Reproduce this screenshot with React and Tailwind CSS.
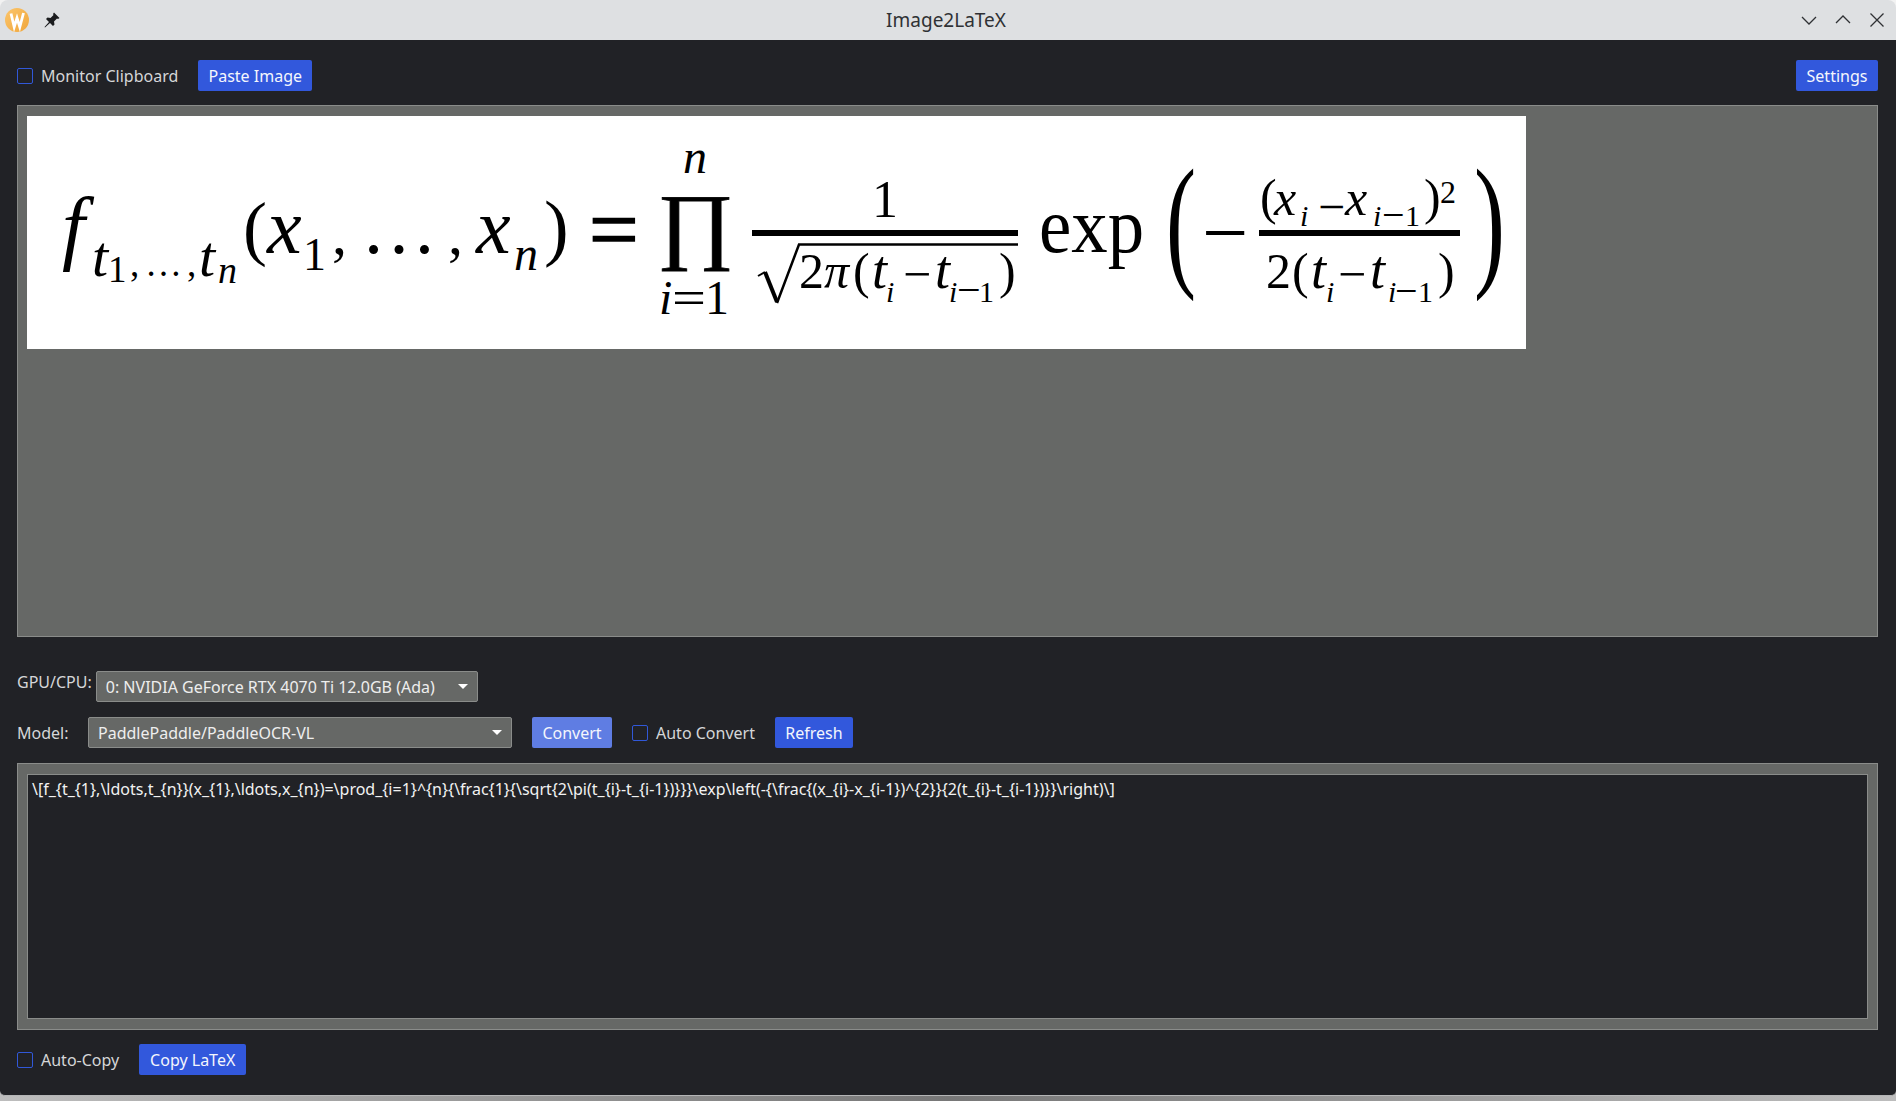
const ui = { fontFamily: '"Noto Sans", sans-serif' };

function Checkbox({ label }) {
  return (
    <label className="flex items-center gap-2 text-[16px] text-[#d5d6d8]">
      <span className="w-4 h-4 border border-[#3158d8] rounded-[2px]" />
      {label}
    </label>
  );
}

function Button({ children, light, width }) {
  return (
    <button
      className={`h-[31px] rounded-[2px] text-[16px] text-[#f4f6fc] ${width} ${light ? "bg-[#5f7de3]" : "bg-[#3258dc]"}`}
    >
      {children}
    </button>
  );
}

function Combo({ children, width }) {
  return (
    <div className={`h-[31px] flex items-center justify-between pl-[9px] pr-[9px] bg-[#666866] border border-[#8a8c8a] rounded-[2px] text-[16px] text-[#eeeeee] ${width}`}>
      <span>{children}</span>
      <span className="w-0 h-0 border-x-[5px] border-x-transparent border-t-[5px] border-t-white" />
    </div>
  );
}

// formula picture: each run sits at its own spot, like the rendered image it stands for
function Formula() {
  return (
    <svg viewBox="0 0 1499 233" className="w-[1499px] h-[233px] block" fill="#000" style={{ fontFamily: '"Liberation Serif", serif' }}>
      <g fontStyle="italic">
        <text x="35" y="138" fontSize="82">f</text>
        <text x="65" y="160" fontSize="58">t</text>
        <text x="172" y="160" fontSize="58">t</text>
        <text x="191" y="167" fontSize="38">n</text>
        <text x="240" y="137" fontSize="78">x</text>
        <text x="449" y="137" fontSize="78">x</text>
        <text x="487" y="154" fontSize="48">n</text>
        <text x="656" y="57" fontSize="48">n</text>
        <text x="632" y="198" fontSize="48">i</text>

        <text x="797" y="172" fontSize="50">π</text>
        <text x="845" y="172" fontSize="54">t</text>
        <text x="859" y="186" fontSize="30">i</text>
        <text x="908" y="172" fontSize="54">t</text>
        <text x="922" y="186" fontSize="30">i</text>

        <text x="1247" y="99" fontSize="50">x</text>
        <text x="1273" y="110" fontSize="30">i</text>
        <text x="1318" y="99" fontSize="50">x</text>
        <text x="1346" y="110" fontSize="30">i</text>

        <text x="1284" y="172" fontSize="54">t</text>
        <text x="1299" y="186" fontSize="30">i</text>
        <text x="1343" y="172" fontSize="54">t</text>
        <text x="1361" y="186" fontSize="30">i</text>
      </g>

      <text x="81" y="166" fontSize="37">1</text>
      <text x="103" y="160" fontSize="37">,</text>
      <text x="118" y="160" fontSize="37">…</text>
      <text x="160" y="160" fontSize="37">,</text>
      <text x="216" y="136" fontSize="72">(</text>
      <text x="276" y="154" fontSize="46">1</text>
      <text x="305" y="138" fontSize="60">,</text>
      <text x="334" y="137" fontSize="76">…</text>
      <text x="421" y="138" fontSize="60">,</text>
      <text x="517" y="136" fontSize="74">)</text>
      <text x="562" y="143" fontSize="88" stroke="#000" strokeWidth="1.5">=</text>
      <text x="630" y="137" fontSize="85" textLength="77" lengthAdjust="spacingAndGlyphs" stroke="#000" strokeWidth="0.8">∏</text>
      <text x="645" y="198" fontSize="48" textLength="34" lengthAdjust="spacingAndGlyphs">=</text>
      <text x="678" y="198" fontSize="48">1</text>

      <text x="845" y="101" fontSize="52">1</text>
      <rect x="725" y="114" width="266" height="6" />
      <path d="M731 160 L738 156" fill="none" stroke="#000" strokeWidth="2" />
      <path d="M738 156 L750 186" fill="none" stroke="#000" strokeWidth="4" />
      <path d="M750 187 L772 128.500 L991 128.500" fill="none" stroke="#000" strokeWidth="2.500" />
      <text x="772" y="172" fontSize="50">2</text>
      <text x="826" y="172" fontSize="50">(</text>
      <text x="876" y="175" fontSize="50">−</text>
      <text x="930" y="188" fontSize="42">−</text>
      <text x="952" y="186" fontSize="30">1</text>
      <text x="972" y="172" fontSize="50">)</text>

      <text x="1012" y="136" fontSize="78" textLength="105" lengthAdjust="spacingAndGlyphs">exp</text>
      <text x="1139" y="154" fontSize="147" textLength="30" lengthAdjust="spacingAndGlyphs">(</text>
      <text x="1175" y="144" fontSize="82">−</text>

      <text x="1233" y="98" fontSize="50">(</text>
      <text x="1291" y="107" fontSize="48">−</text>
      <text x="1355" y="112" fontSize="40">−</text>
      <text x="1378" y="110" fontSize="30">1</text>
      <text x="1397" y="98" fontSize="50">)</text>
      <text x="1413" y="87" fontSize="32">2</text>
      <rect x="1232" y="114" width="201" height="6" />
      <text x="1239" y="172" fontSize="50">2</text>
      <text x="1265" y="172" fontSize="50">(</text>
      <text x="1311" y="175" fontSize="50">−</text>
      <text x="1368" y="188" fontSize="40">−</text>
      <text x="1391" y="186" fontSize="30">1</text>
      <text x="1411" y="172" fontSize="50">)</text>
      <text x="1447" y="154" fontSize="147" textLength="31" lengthAdjust="spacingAndGlyphs">)</text>
    </svg>
  );
}

export default function App() {
  return (
    <div className="w-[1896px] h-[1101px] flex flex-col bg-linear-to-r from-[#bdbdbd] via-[#777777] to-[#bdbdbd] overflow-hidden" style={ui}>
      <div className="shrink-0 bg-[#f2f2f2]">
        <div className="h-10 grid grid-cols-[1fr_auto_1fr] items-center pl-[5px] pr-[9px] bg-[#dee0e2] rounded-t-[8px]">
          <div className="flex items-center gap-[15px]">
            <svg width="24" height="24" viewBox="0 0 24 24">
              <defs>
                <linearGradient id="logo" x1="0" y1="0" x2="1" y2="1">
                  <stop offset="0" stopColor="#fbc56c" />
                  <stop offset="1" stopColor="#f0a63a" />
                </linearGradient>
              </defs>
              <circle cx="12" cy="12" r="12" fill="url(#logo)" />
              <path d="M6 5.500 9.200 19 12 10 14.800 19 18.500 5" fill="none" stroke="#fff" strokeWidth="2.800" />
            </svg>
            <svg width="16" height="16" viewBox="0 0 16 16" fill="#1b1c1e">
              <path d="M10 .5 15.5 6 14 7 13 6.500 10 9.500 10.500 12.500 9 14 6 11 1 15.500 .5 15 5 10 2 7 3.500 5.500 6.500 6 9.500 3 9 2z" />
            </svg>
          </div>
          <span className="text-[19px] text-[#2f3134]">Image2LaTeX</span>
          <div className="flex items-center justify-end gap-[14px] text-[#2f3134]">
            <svg width="20" height="20" viewBox="0 0 20 20" fill="none" stroke="currentColor" strokeWidth="1.3"><path d="M3 7 10 14 17 7" /></svg>
            <svg width="20" height="20" viewBox="0 0 20 20" fill="none" stroke="currentColor" strokeWidth="1.3"><path d="M3 13 10 6 17 13" /></svg>
            <svg width="20" height="20" viewBox="0 0 20 20" fill="none" stroke="currentColor" strokeWidth="1.3"><path d="M3.500 3.500 16.500 16.500M16.500 3.500 3.500 16.500" /></svg>
          </div>
        </div>
      </div>

      <div className="h-[1056px] shrink-0 flex flex-col bg-[#212226] pl-[17px] pr-[18px] pt-[20px] rounded-b-[5px] border-b border-[#b4b5b6]">
        <div className="h-[31px] flex items-center justify-between">
          <div className="flex items-center gap-5">
            <Checkbox label="Monitor Clipboard" />
            <Button width="w-[114px]">Paste Image</Button>
          </div>
          <Button width="w-[82px]">Settings</Button>
        </div>

        <div className="h-[532px] mt-[14px] px-[9px] py-[10px] bg-[#666866] border border-[#8a8c8a]">
          <div className="w-[1499px] h-[233px] bg-white">
            <Formula />
          </div>
        </div>

        <div className="h-[31px] mt-[34px] flex gap-1 text-[16px] text-[#d5d6d8]">
          <span className="leading-[22px]">GPU/CPU:</span>
          <Combo width="w-[382px]">0: NVIDIA GeForce RTX 4070 Ti 12.0GB (Ada)</Combo>
        </div>

        <div className="h-[31px] mt-[15px] flex items-center">
          <span className="w-[71px] text-[16px] text-[#d5d6d8]">Model:</span>
          <Combo width="w-[424px]">PaddlePaddle/PaddleOCR-VL</Combo>
          <div className="ml-5"><Button light width="w-[80px]">Convert</Button></div>
          <div className="ml-5"><Checkbox label="Auto Convert" /></div>
          <div className="ml-5"><Button width="w-[78px]">Refresh</Button></div>
        </div>

        <div className="h-[267px] mt-[15px] px-[9px] py-[10px] bg-[#666866] border border-[#8a8c8a]">
          <div className="h-full px-1 py-[3px] bg-[#212226] border border-[#8a8c8a] text-[16px] leading-[22px] text-[#f2f2f2] whitespace-nowrap">
            {"\\[f_{t_{1},\\ldots,t_{n}}(x_{1},\\ldots,x_{n})=\\prod_{i=1}^{n}{\\frac{1}{\\sqrt{2\\pi(t_{i}-t_{i-1})}}}\\exp\\left(-{\\frac{(x_{i}-x_{i-1})^{2}}{2(t_{i}-t_{i-1})}}\\right)\\]"}
          </div>
        </div>

        <div className="h-[31px] mt-[14px] flex items-center gap-5">
          <Checkbox label="Auto-Copy" />
          <Button width="w-[107px]">Copy LaTeX</Button>
        </div>
      </div>
    </div>
  );
}
